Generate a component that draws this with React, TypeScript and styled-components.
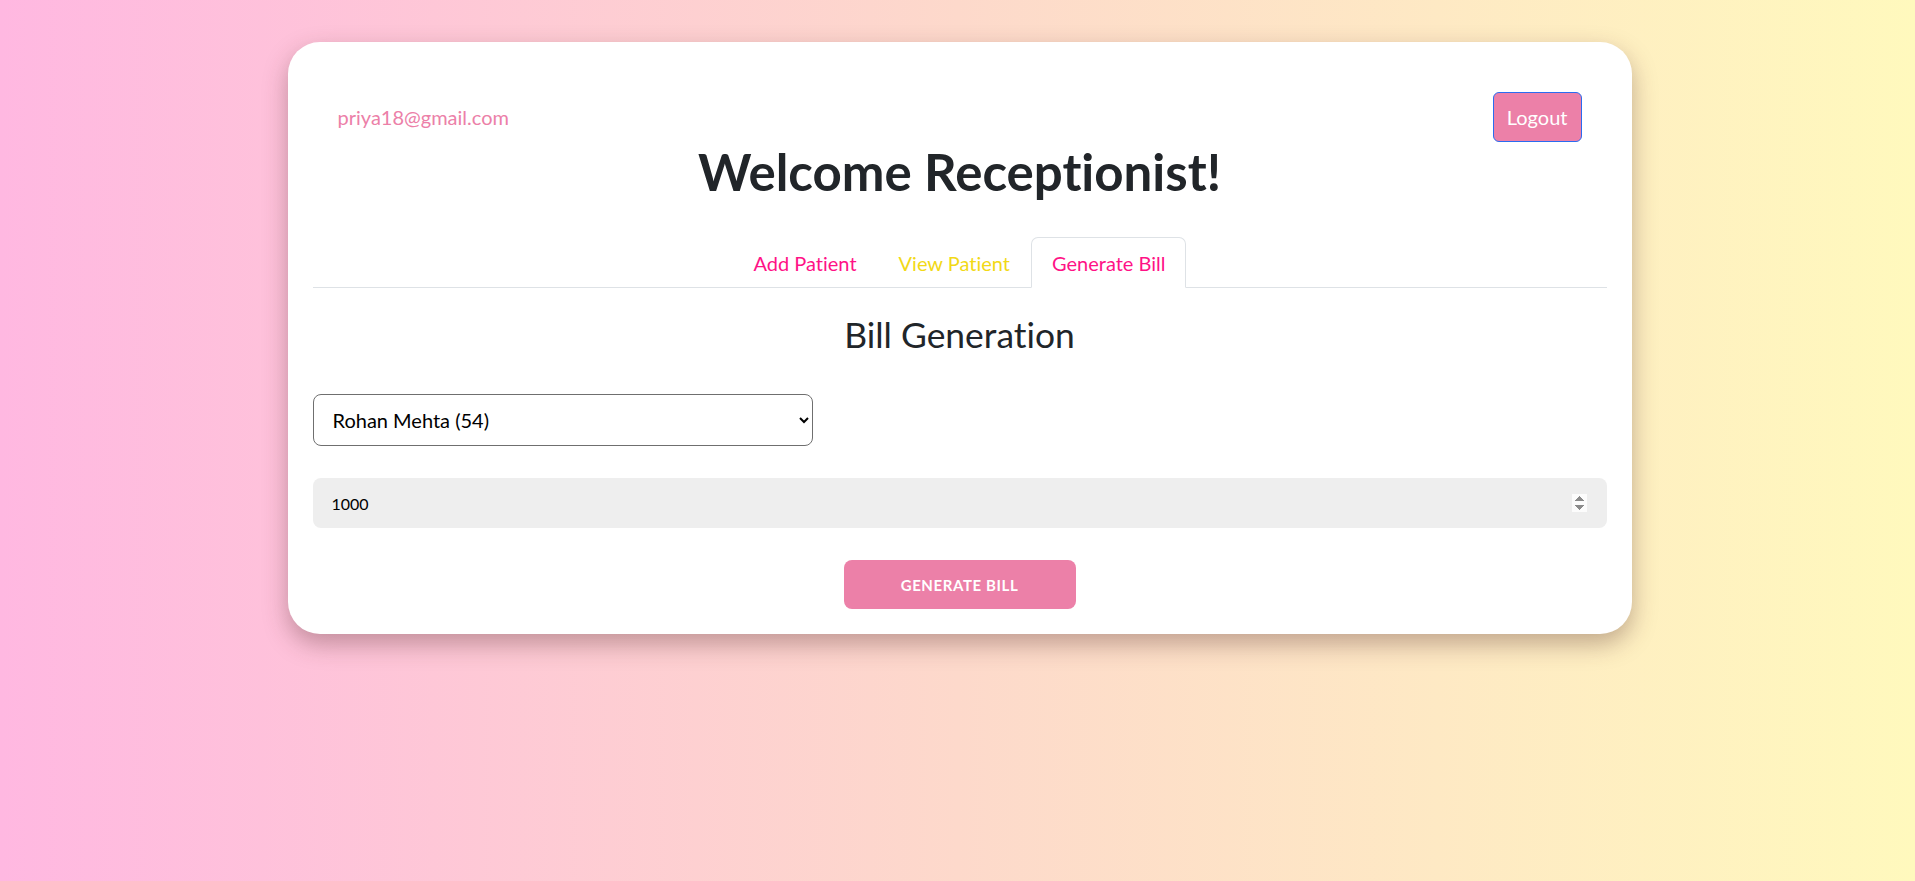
import React, { useState } from "react";
import styled, { createGlobalStyle } from "styled-components";

const GlobalStyle = createGlobalStyle`
  html, body {
    margin: 0;
    padding: 0;
  }
  body {
    min-height: 100vh;
    font-family: Lato, "Open Sans", sans-serif;
    font-variant-ligatures: no-common-ligatures;
    background: linear-gradient(to right, #ffb8e1 0%, #fdd9cb 50%, #fff9bd 100%);
    color: #212529;
  }
  button, input, select {
    font-variant-ligatures: no-common-ligatures;
  }
`;

const Page = styled.div`
  min-height: 881px;
  padding-top: 42px;
  box-sizing: border-box;
`;

const Card = styled.main`
  width: 1344px;
  margin-left: calc(50% - 670px);
  box-sizing: border-box;
  padding: 25px;
  background: #ffffff;
  border-radius: 32px;
  box-shadow: 0 10px 24px rgba(80, 40, 40, 0.35);
`;

const Header = styled.header`
  display: flex;
  justify-content: space-between;
  align-items: center;
  margin-top: 25px;
  padding: 0 25px;
`;

const Email = styled.span`
  font-size: 20px;
  color: #ec80a8;
`;

const LogoutButton = styled.button`
  font-family: Lato, sans-serif;
  font-size: 20px;
  line-height: 30px;
  padding: 9px 13px;
  color: #ffffff;
  background: #ec80a8;
  border: 1px solid #2a6cf0;
  border-radius: 6px;
  cursor: pointer;
`;

const Title = styled.h1`
  margin: 0 0 35px;
  font-size: 51px;
  line-height: 60px;
  font-weight: 700;
  text-align: center;
  color: #212529;
`;

const Tabs = styled.ul`
  display: flex;
  justify-content: center;
  list-style: none;
  margin: 0;
  padding: 0;
  border-bottom: 1px solid #dee2e6;
`;

const TabLink = styled.button<{ $color: string; $active?: boolean }>`
  font-family: Lato, sans-serif;
  font-size: 20px;
  line-height: 30px;
  padding: 9.5px 20px;
  margin-bottom: -1px;
  background: ${(p) => (p.$active ? "#ffffff" : "transparent")};
  color: ${(p) => p.$color};
  border: 1px solid ${(p) => (p.$active ? "#dee2e6" : "transparent")};
  border-bottom-color: ${(p) => (p.$active ? "#ffffff" : "transparent")};
  border-radius: 7px 7px 0 0;
  cursor: pointer;
`;

const SectionTitle = styled.h2`
  margin: 26px 0 38px;
  font-size: 35.4px;
  line-height: 42px;
  font-weight: 400;
  text-align: center;
  color: #212529;
`;

const Form = styled.form`
  display: flex;
  flex-direction: column;
  gap: 32px;
`;

const Select = styled.select`
  width: 500px;
  height: 52px;
  box-sizing: border-box;
  padding: 0 14px 0 15px;
  font-family: Lato, sans-serif;
  font-size: 20px;
  color: #000000;
  background: #ffffff;
  border: 1px solid #6f6f6f;
  border-radius: 8px;
`;

const AmountInput = styled.input`
  width: 100%;
  height: 50px;
  box-sizing: border-box;
  padding: 0 20px 0 19px;
  font-family: Lato, sans-serif;
  font-size: 16px;
  color: #000000;
  background: #eeeeee;
  border: none;
  border-radius: 8px;
  outline: none;

  &::-webkit-inner-spin-button,
  &::-webkit-outer-spin-button {
    opacity: 1;
  }
`;

const SubmitButton = styled.button`
  align-self: center;
  width: 232px;
  height: 49px;
  font-family: Lato, sans-serif;
  font-size: 15px;
  font-weight: 700;
  letter-spacing: 0.6px;
  text-transform: uppercase;
  color: #ffffff;
  background: #ec80a8;
  border: none;
  border-radius: 8px;
  cursor: pointer;
`;

const tabs = [
  { label: "Add Patient", color: "#ff1286" },
  { label: "View Patient", color: "#f2d916" },
  { label: "Generate Bill", color: "#ff1286" },
];

export default function App() {
  const [active, setActive] = useState(2);
  const [amount, setAmount] = useState("1000");
  return (
    <>
      <GlobalStyle />
      <Page>
        <Card>
          <Header>
            <Email>priya18@gmail.com</Email>
            <LogoutButton type="button">Logout</LogoutButton>
          </Header>
          <Title>Welcome Receptionist!</Title>
          <Tabs>
            {tabs.map((t, i) => (
              <li key={t.label}>
                <TabLink
                  type="button"
                  $color={t.color}
                  $active={i === active}
                  onClick={() => setActive(i)}
                >
                  {t.label}
                </TabLink>
              </li>
            ))}
          </Tabs>
          <SectionTitle>Bill Generation</SectionTitle>
          <Form onSubmit={(e) => e.preventDefault()}>
            <Select defaultValue="54">
              <option value="54">Rohan Mehta (54)</option>
            </Select>
            <AmountInput
              type="number"
              value={amount}
              onChange={(e) => setAmount(e.target.value)}
            />
            <SubmitButton type="submit">Generate Bill</SubmitButton>
          </Form>
        </Card>
      </Page>
    </>
  );
}
